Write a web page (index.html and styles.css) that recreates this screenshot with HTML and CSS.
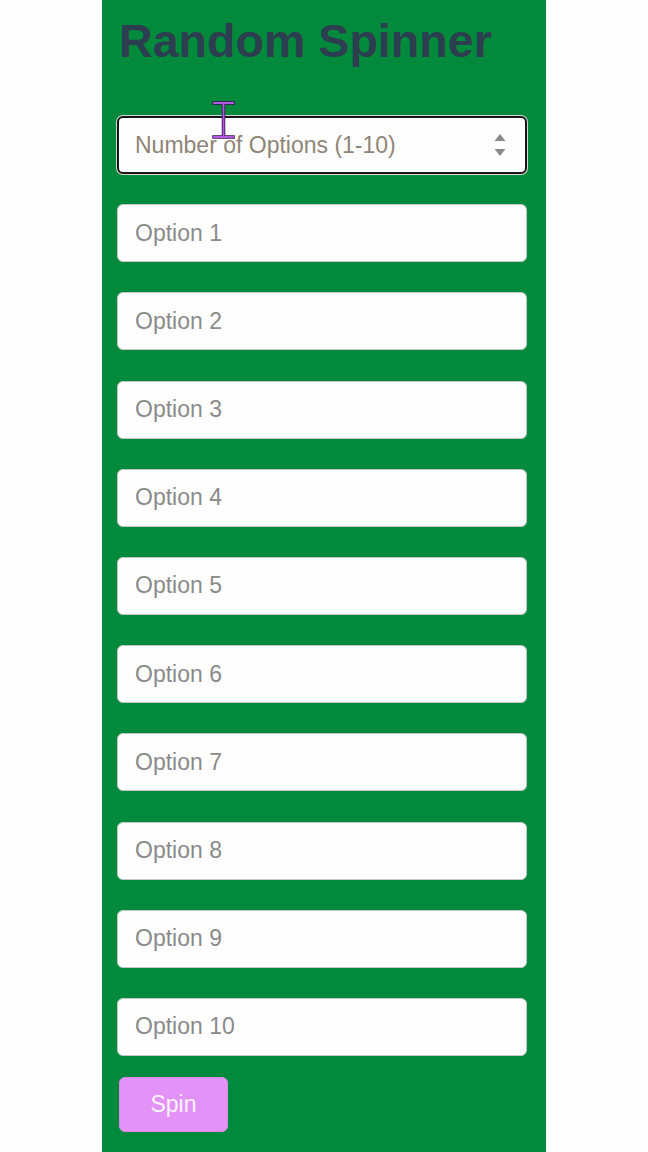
FILE: index.html
```html
<!DOCTYPE html>
<html lang="en">
<head>
<meta charset="utf-8">
<title>Random Spinner</title>
<link rel="stylesheet" href="styles.css">
</head>
<body>
<div class="panel">
  <h1 class="title">Random Spinner</h1>
  <div class="fields">
    <div class="field focused">
      <input class="field-input" type="text" placeholder="Number of Options (1-10)">
      <span class="stepper">
        <svg width="12" height="24" viewBox="0 0 12 24"><path d="M6 1 L11.5 8 L0.5 8 Z" fill="#8a8a8a"/><path d="M0.5 16 L11.5 16 L6 23 Z" fill="#8a8a8a"/></svg>
      </span>
    </div>
    <div class="field"><input class="field-input" type="text" placeholder="Option 1"></div>
    <div class="field"><input class="field-input" type="text" placeholder="Option 2"></div>
    <div class="field"><input class="field-input" type="text" placeholder="Option 3"></div>
    <div class="field"><input class="field-input" type="text" placeholder="Option 4"></div>
    <div class="field"><input class="field-input" type="text" placeholder="Option 5"></div>
    <div class="field"><input class="field-input" type="text" placeholder="Option 6"></div>
    <div class="field"><input class="field-input" type="text" placeholder="Option 7"></div>
    <div class="field"><input class="field-input" type="text" placeholder="Option 8"></div>
    <div class="field"><input class="field-input" type="text" placeholder="Option 9"></div>
    <div class="field"><input class="field-input" type="text" placeholder="Option 10"></div>
  </div>
  <button class="spin" type="button">Spin</button>
  <svg class="cursor" width="26" height="40" viewBox="0 0 26 40">
    <path d="M3 2 H22 M12.5 2 V36 M3 36 H22" stroke="#3a1050" stroke-width="3.5" fill="none" stroke-linecap="square"/>
    <path d="M3 2 H22 M12.5 2 V36 M3 36 H22" stroke="#b45ae0" stroke-width="1.8" fill="none" stroke-linecap="square"/>
  </svg>
</div>
</body>
</html>
```

FILE: styles.css
```css
html, body {
  margin: 0;
  padding: 0;
  background: #fdfdfd;
}

body {
  font-family: "Liberation Sans", Arial, sans-serif;
}

.panel {
  position: relative;
  width: 444px;
  min-height: 1152px;
  margin: 0 auto;
  box-sizing: border-box;
  padding: 14px 15px 0 15px;
  background: #018a3c;
}

.title {
  margin: 0 0 48px 2px;
  font-size: 46.6px;
  line-height: 54px;
  font-weight: bold;
  color: #2c3e50;
}

.fields {
  display: flex;
  flex-direction: column;
  gap: 30.2px;
}

.field {
  display: flex;
  align-items: center;
  width: 410px;
  height: 58px;
  box-sizing: border-box;
  border: 1px solid #c8c8c8;
  border-radius: 6px;
  background: #fefefe;
  padding: 0 0 0 17px;
}

.field.focused {
  border: 2px solid #151515;
  padding-left: 16px;
  padding-right: 19px;
  box-shadow: 0 0 0 1px #d8d8d8;
}

.field-input {
  flex: 1;
  min-width: 0;
  border: none;
  outline: none;
  background: transparent;
  padding: 0;
  font-family: "Liberation Sans", Arial, sans-serif;
  font-size: 23px;
  color: #333;
}

.field-input::placeholder {
  color: #8a8a8a;
}

.focused .field-input::placeholder {
  color: #8f8577;
}

.stepper {
  display: flex;
  align-items: center;
}

.spin {
  display: block;
  margin: 21px 0 0 2px;
  width: 109px;
  height: 55px;
  border: 1px solid #d98ae8;
  border-radius: 6px;
  background: #e392f8;
  color: #fbf4ff;
  font-family: "Liberation Sans", Arial, sans-serif;
  font-size: 23px;
  padding: 0;
}

.cursor {
  position: absolute;
  left: 109px;
  top: 101px;
}
```
